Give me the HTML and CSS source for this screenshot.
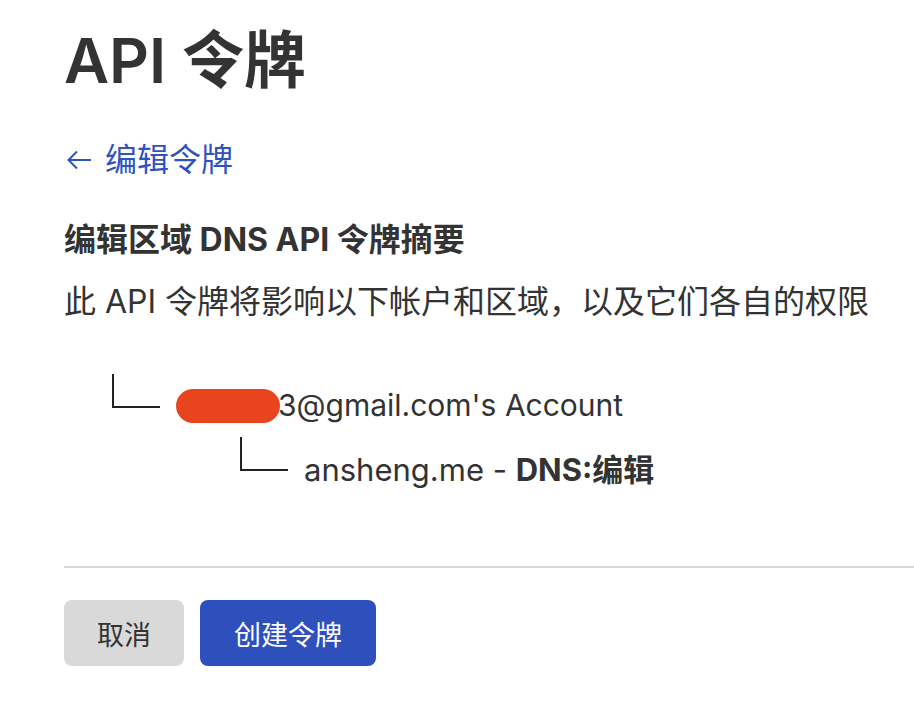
FILE: index.html
```html
<!DOCTYPE html>
<html lang="zh-CN">
<head>
<meta charset="utf-8">
<title>API 令牌</title>
<link rel="stylesheet" href="styles.css">
</head>
<body>
<main class="page">
  <h1 class="title">API 令牌</h1>
  <a class="back" href="#">
    <svg class="back-arrow" width="26" height="22" viewBox="0 0 26 22" aria-hidden="true">
      <path d="M25 11H2.5M11 2.5L2.5 11L11 19.5" fill="none" stroke="currentColor" stroke-width="2"/>
    </svg>
    <span>编辑令牌</span>
  </a>
  <h2 class="heading">编辑区域 DNS API 令牌摘要</h2>
  <p class="desc">此 API 令牌将影响以下帐户和区域，以及它们各自的权限</p>

  <div class="tree">
    <div class="tree-row">
      <span class="branch"></span>
      <span class="node node-account"><span class="redact"></span>3@gmail.com's Account</span>
    </div>
    <div class="tree-row level-2">
      <span class="branch"></span>
      <span class="node">ansheng.me - <b>DNS:编辑</b></span>
    </div>
  </div>

  <hr class="divider">

  <div class="actions">
    <button class="btn btn-cancel" type="button">取消</button>
    <button class="btn btn-primary" type="button">创建令牌</button>
  </div>
</main>
</body>
</html>
```
FILE: styles.css
```css
* { box-sizing: border-box; }

html, body {
  margin: 0;
  padding: 0;
  background: #ffffff;
}

body {
  font-family: Inter, "Noto Sans CJK SC", sans-serif;
  color: #333333;
  overflow: hidden;
}

.page {
  padding: 25px 0 0 64px;
}

.title {
  margin: 0;
  font-size: 62px;
  line-height: 72px;
  font-weight: 600;
  color: #333333;
}

.back {
  margin-top: 43px;
  display: flex;
  align-items: center;
  gap: 13px;
  height: 40px;
  color: #2f52bf;
  text-decoration: none;
  font-size: 32px;
  line-height: 40px;
}

.back-arrow {
  display: block;
  margin-left: 2px;
}

.heading {
  margin: 40px 0 0;
  font-size: 32px;
  line-height: 40px;
  font-weight: 700;
}

.desc {
  margin: 22px 0 0;
  font-size: 32px;
  line-height: 40px;
}

.tree {
  margin-top: 52px;
  padding-left: 48px;
  display: flex;
  flex-direction: column;
  gap: 14px;
}

.tree-row {
  display: flex;
  align-items: flex-end;
  gap: 16px;
}

.tree-row.level-2 {
  padding-left: 128px;
}

.branch {
  width: 48px;
  height: 34px;
  margin-bottom: 15px;
  border-left: 2px solid #222222;
  border-bottom: 2px solid #222222;
  flex: none;
}

.node {
  font-size: 31px;
  line-height: 32px;
  white-space: nowrap;
}

.node-account {
  font-size: 30px;
}

.node b {
  font-weight: 700;
}

.redact {
  position: relative;
  z-index: 1;
  display: inline-block;
  width: 104px;
  height: 34px;
  margin-right: -2px;
  vertical-align: -7px;
  border-radius: 17px;
  background: #e8451f;
}

.divider {
  margin: 80px 0 0;
  border: 0;
  height: 2px;
  background: #d9d9d9;
}

.actions {
  margin-top: 32px;
  display: flex;
  gap: 16px;
}

.btn {
  height: 66px;
  border: 0;
  border-radius: 8px;
  font-family: Inter, "Noto Sans CJK SC", sans-serif;
  font-size: 27px;
  padding: 0;
}

.btn-cancel {
  width: 120px;
  background: #d9d9d9;
  color: #333333;
}

.btn-primary {
  width: 176px;
  background: #2d50bd;
  color: #ffffff;
}
```
